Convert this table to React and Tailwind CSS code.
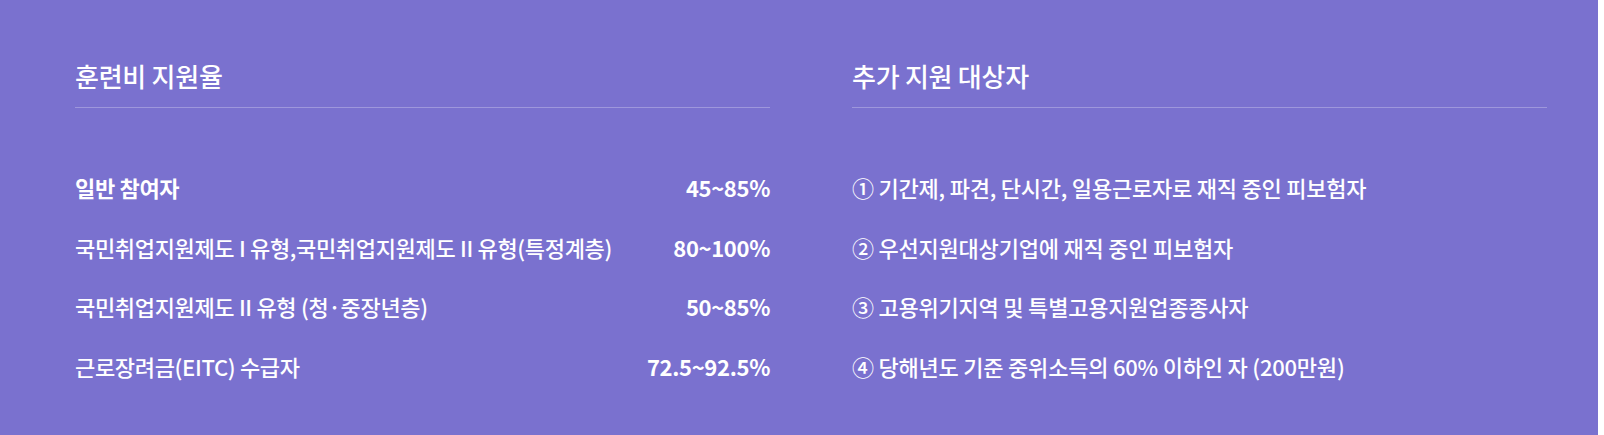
const rates = [
  { label: "일반 참여자", value: "45~85%", strong: true },
  { label: "국민취업지원제도 I 유형,국민취업지원제도 II 유형(특정계층)", value: "80~100%" },
  { label: "국민취업지원제도 II 유형 (청·중장년층)", value: "50~85%" },
  { label: "근로장려금(EITC) 수급자", value: "72.5~92.5%" },
];

const targets = [
  "① 기간제, 파견, 단시간, 일용근로자로 재직 중인 피보험자",
  "② 우선지원대상기업에 재직 중인 피보험자",
  "③ 고용위기지역 및 특별고용지원업종종사자",
  "④ 당해년도 기준 중위소득의 60% 이하인 자 (200만원)",
];

function Section({ title, children }) {
  return (
    <section className="w-[695px] pt-[58px]">
      <h2 className="text-[26px] leading-[36px] font-medium tracking-[-0.01em] pb-[13px] border-b border-[#9e97dc]">
        {title}
      </h2>
      <ul className="mt-[65px] flex flex-col gap-[30.5px]">{children}</ul>
    </section>
  );
}

export default function App() {
  return (
    <div className="flex h-[435px] font-['Noto_Sans_CJK_KR','Noto_Sans',sans-serif] text-white">
      <div className="flex-1 bg-[#7a71cf] pl-[75px] flex gap-[82px]">
        <Section title="훈련비 지원율">
          {rates.map((r) => (
            <li
              key={r.label}
              className={`flex justify-between text-[22px] leading-[29px] tracking-[-0.015em] ${
                r.strong ? "font-bold" : "font-medium"
              }`}
            >
              <span>{r.label}</span>
              <span className="font-semibold">{r.value}</span>
            </li>
          ))}
        </Section>
        <Section title="추가 지원 대상자">
          {targets.map((t) => (
            <li key={t} className="text-[22px] leading-[29px] tracking-[-0.01em] font-medium">
              {t}
            </li>
          ))}
        </Section>
      </div>
      <div className="w-[6px] bg-white" />
    </div>
  );
}
